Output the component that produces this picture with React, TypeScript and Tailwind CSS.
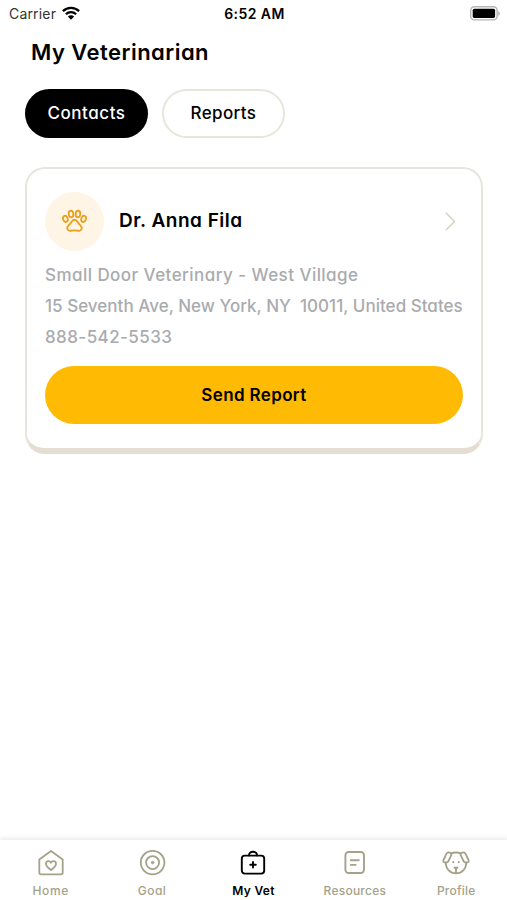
import type { ReactNode } from "react";

const line = {
  fill: "none",
  stroke: "currentColor",
  strokeLinecap: "round" as const,
  strokeLinejoin: "round" as const,
};

function StatusBar() {
  return (
    <header className="grid h-7 grid-cols-3 items-center pr-[7px] pl-[9px] [font-feature-settings:normal]">
      <div className="flex items-center gap-[6px] text-[#333]">
        <span className="text-[14px] leading-none tracking-[0.012em]">Carrier</span>
        <svg width="18" height="14" viewBox="0 0 18 14" className="-mt-[2px] text-black">
          <g fill="none" stroke="currentColor" strokeWidth="2.3">
            <path d="M0.9 5.1a11.6 11.6 0 0 1 16.2 0" />
            <path d="M3.9 8.2a7.3 7.3 0 0 1 10.2 0" />
          </g>
          <path d="M9 13.8 5.9 10.6a4.4 4.4 0 0 1 6.2 0Z" fill="currentColor" />
        </svg>
      </div>
      <div className="text-center text-[14px] leading-none font-semibold tracking-[0.03em] whitespace-nowrap">6:52 AM</div>
      <svg className="-mt-[2px] justify-self-end" width="30" height="15" viewBox="0 0 30 15">
        <rect x="0.7" y="0.7" width="26.4" height="13.2" rx="3.6" fill="#fff" stroke="#b5b5b5" strokeWidth="1.4" />
        <rect x="2.7" y="2.7" width="22.4" height="9.2" rx="1.6" fill="#000" />
        <path d="M28.2 5v4.8c1-.4 1.6-1.3 1.6-2.4s-.6-2-1.6-2.4Z" fill="#b5b5b5" />
      </svg>
    </header>
  );
}

function PawIcon() {
  return (
    <svg width="25" height="23" viewBox="0 0 26 24" className="mb-[2px] text-[#e9a11c]" {...line} strokeWidth="1.9">
      <ellipse cx="3.5" cy="10.3" rx="2.4" ry="3.3" transform="rotate(-18 3.5 10.3)" />
      <ellipse cx="9.4" cy="5.2" rx="2.4" ry="3.4" transform="rotate(-6 9.4 5.2)" />
      <ellipse cx="16.6" cy="5.2" rx="2.4" ry="3.4" transform="rotate(6 16.6 5.2)" />
      <ellipse cx="22.5" cy="10.3" rx="2.4" ry="3.3" transform="rotate(18 22.5 10.3)" />
      <path d="M13 11.200c-1.500 0-2.400.9-3.200 2.300-.8 1.400-2 2.700-3.200 3.900-2.300 2.400-.9 5.800 2.200 5.300 2.900-.6 5.500-.6 8.400 0 3.100.5 4.500-2.900 2.200-5.300-1.200-1.200-2.400-2.500-3.200-3.900C15.400 12.100 14.500 11.200 13 11.200Z" />
    </svg>
  );
}

const homeIcon = (
  <svg width="28" height="28" viewBox="0 0 28 28" {...line} strokeWidth="1.8">
    <path d="M2.3 10.4 14 1.9l11.7 8.500v13.200a1.800 1.800 0 0 1-1.800 1.800H4.100a1.800 1.800 0 0 1-1.800-1.800Z" />
    <path d="M14 21c-2-1.500-5-3.600-5-6.300 0-3 3.700-3.600 5-1 1.300-2.600 5-2 5 1 0 2.700-3 4.800-5 6.300Z" />
  </svg>
);

const goalIcon = (
  <svg width="28" height="28" viewBox="0 0 28 28" {...line} strokeWidth="1.8">
    <circle cx="14.6" cy="13.6" r="11.8" />
    <circle cx="14.6" cy="13.6" r="6.5" />
    <circle cx="14.6" cy="13.6" r="1.2" fill="currentColor" strokeWidth="1" />
  </svg>
);

const vetIcon = (
  <svg width="28" height="28" viewBox="0 0 28 28" {...line} strokeWidth="1.9">
    <rect x="2.8" y="6.600" width="22.400" height="18" rx="3" />
    <path d="M10 6.400c0-2.300 1.500-3.600 4-3.600s4 1.300 4 3.600M14 13v5.600M11.200 15.800h5.600" />
  </svg>
);

const resourcesIcon = (
  <svg width="28" height="28" viewBox="0 0 28 28" {...line} strokeWidth="1.9">
    <rect x="4.400" y="3" width="18.600" height="21" rx="3.200" />
    <path d="M9.800 11.200h8M9.800 15.900h4.800" />
  </svg>
);

const profileIcon = (
  <svg width="28" height="28" viewBox="0 0 28 28" {...line} strokeWidth="1.8">
    <path d="M8.800 4.300C12 3.300 16 3.300 19.200 4.300M3.800 13.500v.6c0 5.900 4.300 10.300 10.200 10.300s10.200-4.400 10.200-10.300v-.6" />
    <path d="M8.600 4.100C6.900 2.800 5.100 3.400 4.300 5.100L1.500 11c-.7 1.600.4 2.800 2 2.700 1.800-.1 2.900-.9 3.400-2.500l2.300-4.900c.4-.9.200-1.700-.6-2.200ZM19.400 4.100c1.700-1.300 3.500-.7 4.300 1l2.800 5.900c.7 1.600-.4 2.800-2 2.700-1.800-.1-2.900-.9-3.400-2.500l-2.300-4.900c-.4-.9-.2-1.700.6-2.200Z" />
    <path d="M12.500 18.600h3L14 20.200ZM14 20.200v3.800" />
    <path d="M11.300 13v.2M16.700 13v.2" strokeWidth="2" />
  </svg>
);

function NavItem({ icon, label, spacing, active = false }: { icon: ReactNode; label: string; spacing: string; active?: boolean }) {
  return (
    <button
      className={
        active
          ? "flex flex-col items-center pt-[9px] font-semibold text-black"
          : "flex flex-col items-center pt-[9px] font-medium text-[#a5a28a]"
      }
    >
      {icon}
      <span className={`mt-[5px] text-[12px] leading-[18px] whitespace-nowrap ${spacing}`}>{label}</span>
    </button>
  );
}

export default function App() {
  return (
    <div className="flex h-[900px] w-[507px] flex-col overflow-hidden bg-white font-['Inter',sans-serif] text-black [font-feature-settings:'cv11']">
      <StatusBar />
      <main className="flex-1 px-[25px]">
        <h1 className="pl-[6px] text-[22px] leading-[48px] font-semibold tracking-[0.021em]">My Veterinarian</h1>

        <div className="mt-[13px] flex gap-[14px] text-[17px] font-medium">
          <button className="h-[49px] w-[123px] rounded-full bg-black tracking-[0.032em] text-white">Contacts</button>
          <button className="h-[49px] w-[123px] rounded-full border-2 border-[#e8e6db] tracking-[0.022em]">Reports</button>
        </div>

        <section className="mt-[29px] h-[287px] w-[458px] rounded-[20px] border-2 border-b-[6px] border-[#e7e5df] border-b-[#e3ddd2] px-[18px] pt-[23px]">
          <div className="flex items-center">
            <div className="flex size-[59px] items-center justify-center rounded-full bg-[#fef5e7]">
              <PawIcon />
            </div>
            <h2 className="ml-[15px] flex-1 text-[19px] font-semibold tracking-[0.026em]">Dr. Anna Fila</h2>
            <svg width="12" height="19" viewBox="0 0 12 19" className="mr-[7px] text-[#d5d2c3]" {...line} strokeWidth="1.600">
              <path d="m2.300 1.300 8.200 8.200-8.200 8.200" />
            </svg>
          </div>
          <div className="mt-[9px] text-[17px] leading-[31px] font-medium whitespace-pre text-[#a9abae]">
            <p className="tracking-[0.0265em]">Small Door Veterinary - West Village</p>
            <p className="tracking-[0.0015em]">15 Seventh Ave, New York, NY  10011, United States</p>
            <p className="tracking-[0.025em]">888-542-5533</p>
          </div>
          <button className="mt-[13px] h-[58px] w-full rounded-full bg-[#ffba03] pt-[2px] text-[17px] font-semibold tracking-[0.021em]">
            Send Report
          </button>
        </section>
      </main>

      <nav className="grid h-[60px] grid-cols-5 bg-white shadow-[0_-2px_4px_rgba(0,0,0,0.08)]">
        <NavItem icon={homeIcon} label="Home" spacing="tracking-[0.05em]" />
        <NavItem icon={goalIcon} label="Goal" spacing="tracking-[0.04em]" />
        <NavItem icon={vetIcon} label="My Vet" spacing="tracking-[0.025em]" active />
        <NavItem icon={resourcesIcon} label="Resources" spacing="tracking-[0.02em]" />
        <NavItem icon={profileIcon} label="Profile" spacing="tracking-[0.02em]" />
      </nav>
    </div>
  );
}
